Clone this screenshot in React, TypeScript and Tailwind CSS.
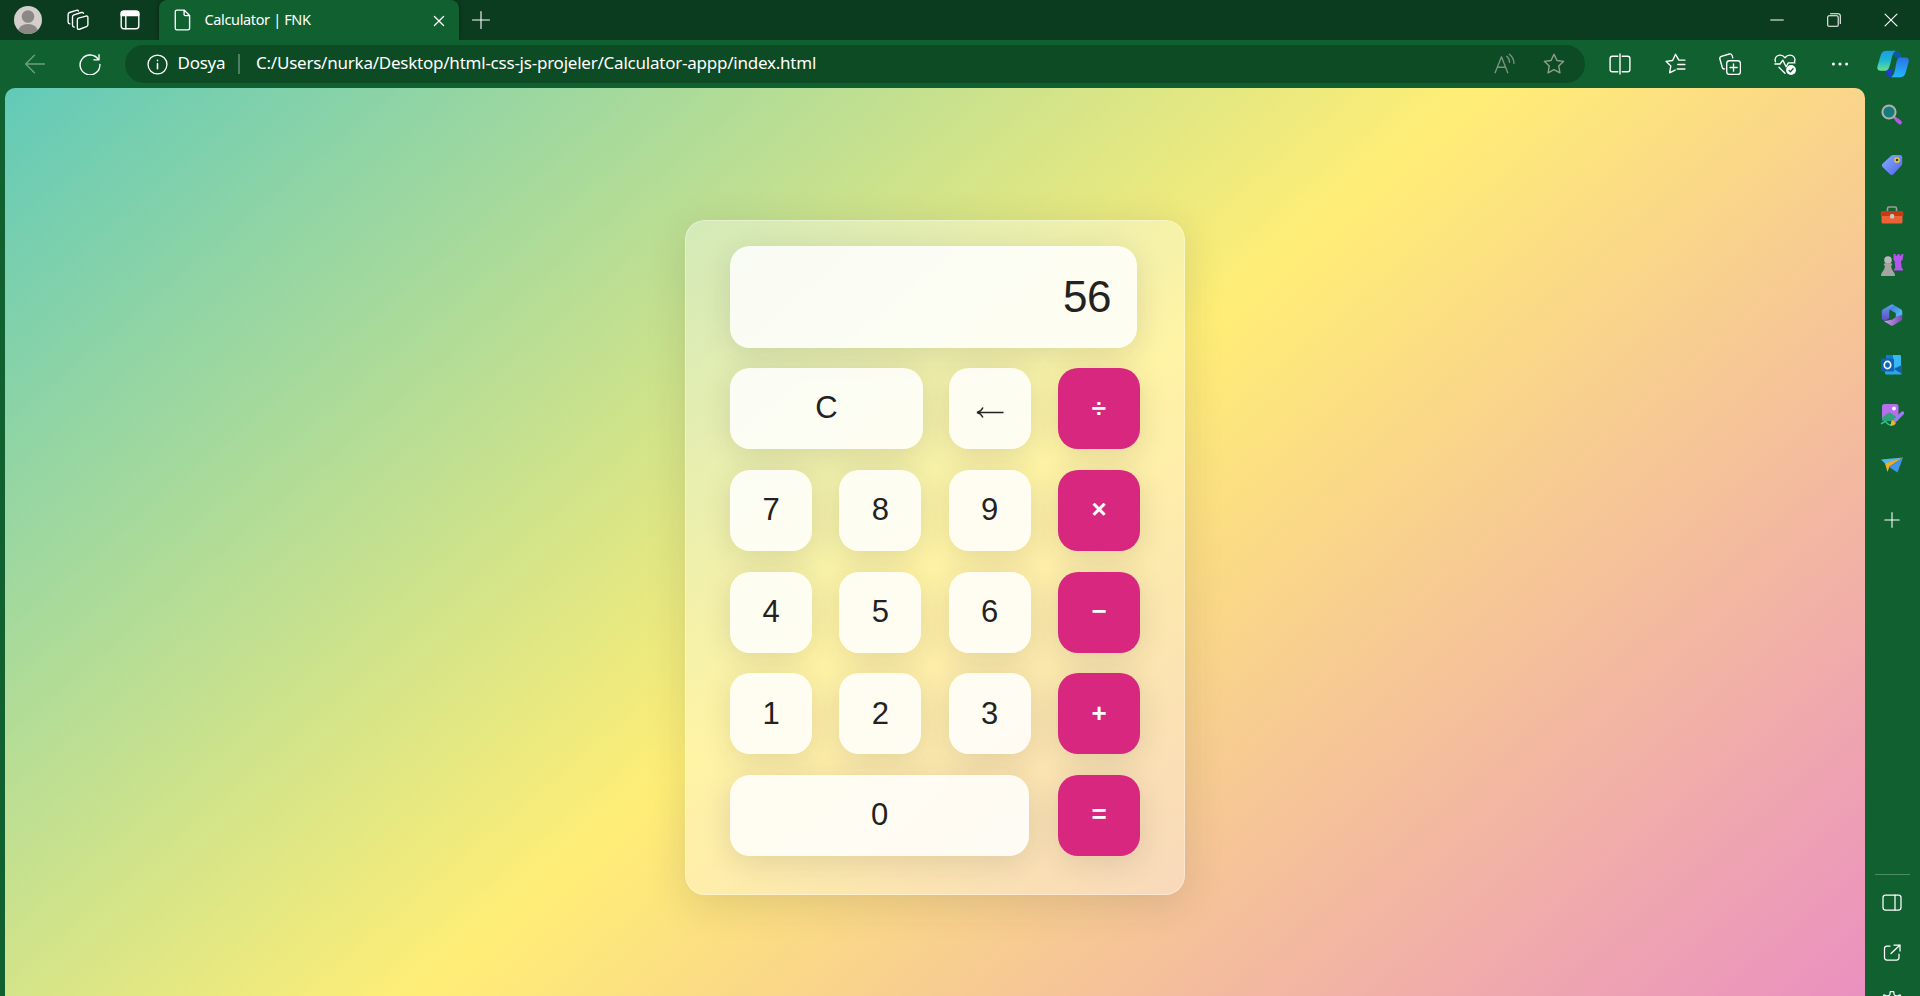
import React from "react";

const ln = { fill: "none", stroke: "currentColor", strokeWidth: 1.25, strokeLinecap: "round", strokeLinejoin: "round" } as const;

function Svg({ s = 20, children, className = "" }: { s?: number; children: React.ReactNode; className?: string }) {
  return (
    <svg width={s} height={s} viewBox="0 0 20 20" className={"shrink-0 " + className} {...ln}>
      {children}
    </svg>
  );
}

function TitleBar() {
  return (
    <header className="flex h-10 shrink-0 items-center bg-[#0c3c20] text-white">
      <div className="flex w-[159px] shrink-0 items-center pl-[14px]">
        <svg width="28" height="28" viewBox="0 0 28 28" className="shrink-0">
          <defs><clipPath id="av"><circle cx="14" cy="14" r="14" /></clipPath></defs>
          <circle cx="14" cy="14" r="14" fill="#d2cfcc" />
          <circle cx="14" cy="10.5" r="6.3" fill="#8c8885" />
          <ellipse cx="14" cy="26" rx="10" ry="8" fill="#8c8885" clipPath="url(#av)" />
        </svg>
        <Svg s={22} className="ml-[25px]">
          <path d="M10.300 8.300l7-1.900q1.700-.4 1.700 1.300v6.700q0 1.300-1.300 1.700l-6.300 2.300q-2 .6-2-1.400V10q0-1.300.9-1.700z" />
          <path d="M6.500 16.500q-1.500-.3-1.500-2V7.200q0-1.400 1.300-1.800l6.700-2.200q1.500-.4 1.900.7M2.600 13.500Q1 13.200 1 11.500V5q0-1.400 1.300-1.800L8.500 1.200q1.500-.4 1.900.7" />
        </Svg>
        <Svg s={22} className="ml-[30px]">
          <rect x="2" y="2" width="16" height="16" rx="2.5" />
          <path d="M2 6V4a2 2 0 0 1 2-2h12a2 2 0 0 1 2 2v2z" fill="currentColor" />
          <path d="M6.200 6v12" />
        </Svg>
      </div>
      <div className="flex h-10 w-[300px] shrink-0 items-center rounded-t-[8px] bg-[#10612f] pl-[13px] shadow-[0_0_4px_rgba(0,0,0,0.5)]">
        <Svg s={22}>
          <path d="M4.500 1h6.500l5 5v11.500a1.500 1.500 0 0 1-1.500 1.500h-10a1.500 1.500 0 0 1-1.500-1.500v-15a1.500 1.500 0 0 1 1.500-1.500z M11 1v4a1 1 0 0 0 1 1h4" />
        </Svg>
        <span className="ml-[10.5px] flex-1 font-['Noto_Sans',sans-serif] text-[14.5px] tracking-[-0.36px]">Calculator | FNK</span>
        <Svg s={14} className="mr-[13px] mt-px"><path d="M3.500 3.500l13 13M16.500 3.500l-13 13" strokeWidth="1.900" /></Svg>
      </div>
      <Svg s={20} className="ml-[12px]"><path d="M10 1.500v17M1.500 10h17" strokeWidth="1.100" /></Svg>
      <div className="ml-auto flex items-center gap-[43px] pr-[22px]">
        <Svg s={14}><path d="M1 10h18" strokeWidth="1.500" /></Svg>
        <Svg s={14}>
          <rect x="1" y="4" width="15" height="15" rx="2" strokeWidth="1.500" />
          <path d="M5 1h11a3 3 0 0 1 3 3v11" strokeWidth="1.500" />
        </Svg>
        <Svg s={14}><path d="M1.500 1.500l17 17M18.500 1.500l-17 17" strokeWidth="1.600" /></Svg>
      </div>
    </header>
  );
}

function CopilotLogo() {
  return (
    <svg width="32" height="28" viewBox="0 0 32 28" className="shrink-0">
      <defs>
        <linearGradient id="c1" x1="0" y1="0" x2="0" y2="1"><stop offset="0" stopColor="#1a9be8" /><stop offset=".5" stopColor="#20b8d0" /><stop offset="1" stopColor="#6be08a" /></linearGradient>
        <linearGradient id="c2" x1="0" y1="0" x2="0" y2="1"><stop offset="0" stopColor="#2a72e8" /><stop offset="1" stopColor="#22b8ff" /></linearGradient>
      </defs>
      <path d="M15 1h5c2 0 3 1 3.500 3l1.200 4h-4c-2.500 0-4.500-2-5.500-7z" fill="#0a5ca0" />
      <path d="M8 20h8l-2 7c-3 0-4-1-5-4z" fill="#1b3fd0" />
      <path d="M9.500 .8h9.500c-3 1-4 6-5.200 11s-2.300 9-5.300 9H4c-3.500 0-4.200-2-3.400-5L3.800 5c.9-3 2.700-4.200 5.700-4.200z" fill="url(#c1)" />
      <path d="M23 7.500h5c3.500 0 4.300 2 3.500 5L28.500 23c-.9 3-2.700 4.200-5.700 4.200H14c3-2 3.500-5 4.500-10S20 7.500 23 7.500z" fill="url(#c2)" />
    </svg>
  );
}

function AddressBar() {
  return (
    <div className="flex h-12 shrink-0 items-center bg-[#10612f] text-white">
      <Svg s={22} className="ml-[24px] text-[#6f9f7f]"><path d="M18.500 10H1.500M9.500 2L1.500 10l8 8" /></Svg>
      <Svg s={22} className="ml-[33px]">
        <path d="M17.600 6A9 9 0 1 0 19 10.500M18.200 1.500V6.200h-4.700" />
      </Svg>
      <div className="ml-[24px] flex h-[38px] w-[1460px] shrink-0 items-center rounded-full bg-[#0d4b25] pl-[22px] font-['Noto_Sans',sans-serif] text-[17px]">
        <Svg s={21}><circle cx="10" cy="10" r="9" /><path d="M10 9v5M10 6v.3" strokeWidth="1.500" /></Svg>
        <span className="ml-[9.500px] w-[48px] whitespace-nowrap pb-[2px] tracking-[-0.250px]">Dosya</span>
        <span className="ml-[12.500px] h-5 w-[2px] bg-[#4d8060]" />
        <span className="ml-[16px] whitespace-nowrap pb-[2px] tracking-[-0.230px]">C:/Users/nurka/Desktop/html-css-js-projeler/Calculator-appp/index.html</span>
        <Svg s={22} className="ml-auto text-[#7d9282]">
          <path d="M1 18L6.800 3.500 12.500 18M3 13h7.500M11.500 3c1.700 1.200 2.600 3 2.600 5.500M14 1.200c2.500 1.900 4 4.500 4.200 8.200" />
        </Svg>
        <Svg s={22} className="ml-[27px] mr-[20px] text-[#93a090]">
          <path d="M10 1.200l2.700 5.600 6.100.8-4.500 4.200 1.100 6.200L10 15.100 4.600 18l1.100-6.200L1.200 7.600l6.100-.8z" />
        </Svg>
      </div>
      <div className="ml-[24px] flex items-center gap-[33px]">
        <Svg s={22}><path d="M8 3H3a2 2 0 0 0-2 2v10a2 2 0 0 0 2 2h5M12 3h5a2 2 0 0 1 2 2v10a2 2 0 0 1-2 2h-5M10 .8v18.400" /></Svg>
        <Svg s={22}><path d="M19 6.500h-5.500L10.500 1.200 7.800 6.800l-6 .8 4.400 4.200L5.100 18l5-2.500M12.500 10.500H19M12 14.500h7" /></Svg>
        <Svg s={22}>
          <rect x="7" y="7" width="12.500" height="12.500" rx="2.500" />
          <path d="M13.200 10v6.500M10 13.200h6.500M5 14.500c-1 .2-1.700-.3-2-1.300L.8 5.500c-.3-1.200.2-2 1.300-2.400L9.500.9c1.200-.3 2 .2 2.400 1.300l.6 2.300" />
        </Svg>
        <Svg s={22}>
          <path d="M1.300 8C.3 5 2 2 5.200 1.900 7.500 1.800 9 3 10 4.300 11 3 12.500 1.800 14.800 1.900 18 2 19.700 5 18.700 8M.8 10h4.700l2.500-3.500 3 6 2-3.500h6M4.500 13l5.500 5.500" />
          <circle cx="15.500" cy="15.500" r="4.500" fill="currentColor" stroke="none" />
          <path d="M13.700 15.800l1.200 1.200 2.400-2.700" stroke="#10612f" />
        </Svg>
        <Svg s={22}><g fill="currentColor" stroke="none"><circle cx="4" cy="10" r="1.400" /><circle cx="10" cy="10" r="1.400" /><circle cx="16" cy="10" r="1.400" /></g></Svg>
      </div>
      <div className="ml-auto mr-[11px]"><CopilotLogo /></div>
    </div>
  );
}

function SideBar() {
  const cell = "flex h-[50px] w-full shrink-0 items-center justify-center";
  return (
    <aside className="flex w-[55px] shrink-0 flex-col items-center overflow-hidden bg-[#10612f] pr-px pt-[2px] text-white">
      <div className={cell}>
        <svg width="22" height="22" viewBox="0 0 22 22">
          <path d="M12.500 12.500l3 3" stroke="#8f8f95" strokeWidth="2.500" />
          <path d="M16 16l3 2.500" stroke="#c44cf4" strokeWidth="4" strokeLinecap="round" />
          <circle cx="8" cy="8" r="6.600" fill="#167b7c" stroke="#b3b0ad" strokeWidth="2" />
        </svg>
      </div>
      <div className={cell}>
        <svg width="22" height="22" viewBox="0 0 22 22">
          <defs><linearGradient id="tag" x1="0" y1="0" x2="1" y2="1"><stop stopColor="#86b0ff" /><stop offset="1" stopColor="#5263ea" /></linearGradient></defs>
          <path d="M12.500 1H19q2.200 0 2.200 2.200V9.500q0 1.200-.8 2.100l-8 8.600q-1.700 1.600-3.400 0L1.500 13q-1.500-1.600 0-3.200l8.700-8Q11.200 1 12.500 1z" fill="url(#tag)" />
          <circle cx="16" cy="6" r="2.100" fill="#24395c" stroke="#f5cc24" strokeWidth="1.500" />
        </svg>
      </div>
      <div className={cell}>
        <svg width="24" height="22" viewBox="0 0 24 22">
          <path d="M7.500 8V4.500Q7.500 3 9 3h6q1.500 0 1.500 1.500v3.500" fill="none" stroke="#a09c9c" strokeWidth="1.600" />
          <rect x="1.500" y="10" width="21" height="9.500" rx="1.500" fill="#ea6236" />
          <path d="M.7 8.500Q.7 7 2.200 7h19.600q1.500 0 1.500 1.500V12H.7z" fill="#c83a16" />
          <rect x="10" y="10" width="4.200" height="4.500" rx="1.500" fill="#c8c8c8" />
        </svg>
      </div>
      <div className={cell}>
        <svg width="24" height="24" viewBox="0 0 24 24">
          <path d="M13.500 1h2v1.500h2V1h2v1.500h2V1h2l-1 6-1.500 1 .7 7 1.300 1v1.500h-9V16l1.300-1-.8-7-1-1z" fill="#b455ee" />
          <circle cx="8" cy="7" r="3.800" fill="#b8b8b8" />
          <path d="M3.800 11.500q0-1.200 1.200-1.200h6q1.200 0 1.200 1.200T11 12.800q.3 4 2.500 6Q15 20 15 23H1q0-3 1.500-4.200 2.200-2 2.500-6-1.200 0-1.200-1.300z" fill="#a4a4a4" />
        </svg>
      </div>
      <div className={cell}>
        <svg width="22" height="22" viewBox="0 0 22 22">
          <defs>
            <linearGradient id="m1" x1="0" y1="0" x2="1" y2="1"><stop stopColor="#3f6fd8" /><stop offset="1" stopColor="#55c8f6" /></linearGradient>
            <linearGradient id="m2" x1="0" y1="0" x2="0" y2="1"><stop stopColor="#5aa0ee" /><stop offset="1" stopColor="#6a45c0" /></linearGradient>
            <linearGradient id="m3" x1="0" y1="0" x2="1" y2="0"><stop stopColor="#d09cf0" /><stop offset="1" stopColor="#6f4fae" /></linearGradient>
          </defs>
          <path d="M10 .7q1-.6 2 0l8 4.500q1.200.8 1.200 2V12l-6.700 1V9L8 5z" fill="url(#m1)" />
          <path d="M10 .7q1.500-.6 3 .2L8.500 5v9L3.500 17.300.8 15V7.200q0-1.200 1.200-2z" fill="url(#m2)" />
          <path d="M3 17.200L11.500 15.500l3-2.500 6.700-2.500V15q0 1.200-1.200 1.800L12 21.500q-1 .5-2 0z" fill="url(#m3)" />
          <path d="M8.500 7.500L14.500 9v4l-3.500 2.200-2.500-1.200z" fill="#10612f" />
        </svg>
      </div>
      <div className={cell}>
        <svg width="22" height="22" viewBox="0 0 22 22">
          <rect x="5" y="1" width="15" height="14" rx="1" fill="#3bb7f0" />
          <path d="M5 1h7v7H5z" fill="#127cc8" />
          <path d="M4 12l7 2 10-3v8q0 1.500-1.500 1.500H5.500Q4 20.500 4 19z" fill="#2da5e8" />
          <path d="M21 11v9l-8-5z" fill="#1260a8" />
          <rect x="0" y="4.500" width="13" height="13" rx="1.200" fill="#0b64b8" />
          <ellipse cx="6.500" cy="11" rx="3.200" ry="3.600" fill="none" stroke="#fff" strokeWidth="1.700" />
        </svg>
      </div>
      <div className={cell}>
        <svg width="24" height="24" viewBox="0 0 24 24">
          <rect x="2" y="1" width="16.500" height="17" rx="2.500" fill="#b66fec" />
          <path d="M2 15l6-5q1.500-1 3 0l7 5v1q0 2-2 2H4q-2 0-2-2z" fill="#2ba577" />
          <circle cx="14" cy="5.500" r="1.900" fill="#fff" />
          <path d="M1 21q5-4 6-1 1 2 5 2" fill="none" stroke="#35c98b" strokeWidth="1.500" />
          <path d="M15 17.500L22.500 10" stroke="#9a7cf2" strokeWidth="3.500" strokeLinecap="round" />
          <path d="M12.500 17l3.500 3q-1.500 3.500-6 2.500 1.500-1 1-3 0-1.500 1.500-2.500z" fill="#f2b32c" />
        </svg>
      </div>
      <div className={cell}>
        <svg width="22" height="20" viewBox="0 0 22 20">
          <path d="M0 4.500L22 2.500 4.500 9z" fill="#55b4f2" />
          <path d="M4 8.500L22 2.500 8.500 11.500 6.500 17z" fill="#f3ad22" />
          <path d="M22 2.500L8 12l8.500 5.500z" fill="#3f96ea" />
        </svg>
      </div>
      <div className="flex h-[60px] w-full shrink-0 items-center justify-center">
        <Svg s={18}><path d="M2 10h16" strokeWidth="1.200" /><path d="M10 2v16" strokeWidth="1.600" opacity=".75" /></Svg>
      </div>
      <div className="mt-auto h-px w-[35px] shrink-0 bg-[#4d8b63]" />
      <div className="flex h-[121px] w-full shrink-0 flex-col items-center pt-[17px]">
        <Svg s={20}><rect x="1" y="3" width="18" height="15" rx="2.500" /><path d="M13 3v15" /></Svg>
        <Svg s={20} className="mt-[30px]"><path d="M8 4H5a2.500 2.500 0 0 0-2.500 2.500v9A2.500 2.500 0 0 0 5 18h9.500a2.500 2.500 0 0 0 2.500-2.500V12M12 3h6v6M18 3l-9 8.500" /></Svg>
        <Svg s={20} className="mt-[28px]"><path d="M7.800 5l.5-3.500h3.400l.5 3.500 2.800 1 3-1.200 1.500 3-3 2.500M7.800 5L5 6 2 4.800l-1.500 3 3 2.500" /></Svg>
      </div>
    </aside>
  );
}

const KEY_SHADOW = "shadow-[0_6px_30px_rgba(40,40,50,0.13)]";

function Key({ label, wide = "", op = false }: { label: string; wide?: string; op?: boolean }) {
  return (
    <button
      className={[
        "flex h-[81px] shrink-0 items-center justify-center rounded-[20px]",
        KEY_SHADOW,
        wide || "w-[82px]",
        op ? "bg-[#d7277f] pb-px text-[26px] font-bold text-white" : "bg-white/85 text-[31px] text-[#222]",
      ].join(" ")}
    >
      {label === "←" ? (
        <svg width="30" height="14" viewBox="0 0 30 14" className="mt-[6px]">
          <path d="M3 7.500h25.500M8 2.500Q6 6.500 2 7.500 6 8.500 8 12.500" fill="none" stroke="#222" strokeWidth="1.400" />
        </svg>
      ) : (
        label
      )}
    </button>
  );
}

function Calculator() {
  return (
    <main className="mt-[132px] h-[675px] w-[500px] shrink-0 rounded-[20px] border border-white/35 bg-white/35 pl-[44px] pt-[25px] font-['Liberation_Sans',Arial,sans-serif] shadow-[0_8px_40px_rgba(40,40,50,0.14)]">
      <div className={"flex h-[102px] w-[407px] items-center justify-end rounded-[20px] bg-white/85 pr-[26px] text-[44px] tracking-[-0.5px] text-[#222] " + KEY_SHADOW}>56</div>
      <div className="mt-[20.2px] flex flex-col gap-[20.7px]">
        <div className="flex w-[410px] justify-between"><Key label="C" wide="w-[193px]" /><div className="flex gap-[27px]"><Key label="←" /><Key label="÷" op /></div></div>
        <div className="flex w-[410px] justify-between"><Key label="7" /><Key label="8" /><Key label="9" /><Key label="×" op /></div>
        <div className="flex w-[410px] justify-between"><Key label="4" /><Key label="5" /><Key label="6" /><Key label="−" op /></div>
        <div className="flex w-[410px] justify-between"><Key label="1" /><Key label="2" /><Key label="3" /><Key label="+" op /></div>
        <div className="flex w-[410px] justify-between"><Key label="0" wide="w-[299px]" /><Key label="=" op /></div>
      </div>
    </main>
  );
}

export default function App() {
  return (
    <div className="flex h-[996px] w-[1920px] flex-col overflow-hidden bg-[#10612f]">
      <TitleBar />
      <AddressBar />
      <div className="flex min-h-0 flex-1">
        <div className="ml-[5px] flex w-[1860px] shrink-0 justify-center overflow-hidden rounded-t-[10px] bg-[linear-gradient(139.5deg,#62cab8_0%,#ffee76_50.4%,#ea90c0_100%)]">
          <Calculator />
        </div>
        <SideBar />
      </div>
    </div>
  );
}
